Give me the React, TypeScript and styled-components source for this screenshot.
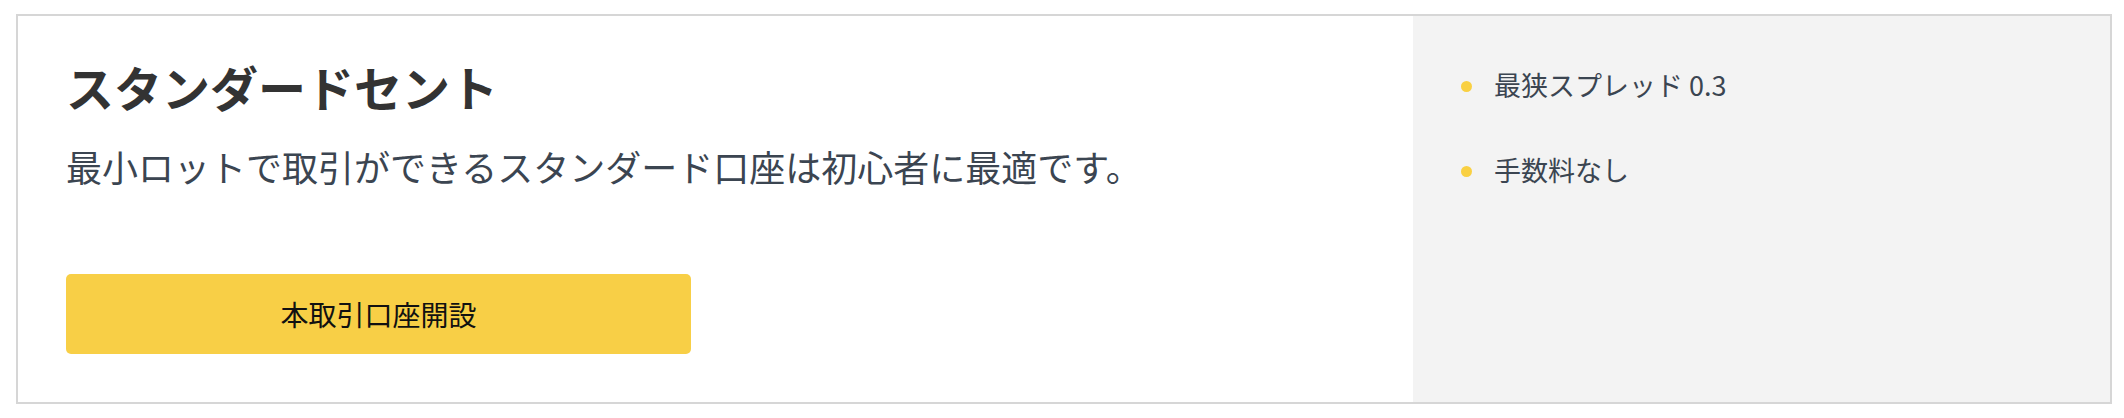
import React from "react";
import styled, { createGlobalStyle } from "styled-components";

const GlobalStyle = createGlobalStyle`
  body {
    margin: 0;
    background: #ffffff;
    font-family: "Noto Sans CJK JP", "Noto Sans", sans-serif;
  }
`;

const Page = styled.div`
  padding: 14px 12px 14px 16px;
`;

const Card = styled.section`
  display: flex;
  border: 2px solid #d6d6d6;
  background: #ffffff;
`;

const Main = styled.div`
  flex: 1;
  padding: 46px 48px 48px 48px;
  display: flex;
  flex-direction: column;
  align-items: flex-start;
`;

const Title = styled.h2`
  margin: 0;
  font-size: 48px;
  line-height: 1;
  font-weight: 700;
  color: #333333;
`;

const Lead = styled.p`
  margin: 38px 0 0;
  font-size: 36px;
  line-height: 1;
  color: #3b4551;
`;

const OpenButton = styled.button`
  margin-top: 90px;
  width: 625px;
  height: 80px;
  border: none;
  border-radius: 5px;
  background: #f8cf46;
  color: #111111;
  font-family: inherit;
  font-size: 28px;
  cursor: pointer;
`;

const Side = styled.aside`
  width: 697px;
  background: #f3f3f3;
  padding: 55px 48px 0;
  box-sizing: border-box;
`;

const List = styled.ul`
  list-style: none;
  margin: 0;
  padding: 0;
  display: flex;
  flex-direction: column;
  gap: 58px;
`;

const Item = styled.li`
  display: flex;
  align-items: center;
  gap: 22px;
  font-size: 27px;
  line-height: 1;
  color: #3b4551;
`;

const Dot = styled.span`
  width: 11px;
  height: 11px;
  border-radius: 50%;
  background: #f9d042;
  flex-shrink: 0;
  margin-top: 4px;
`;

const features = ["最狭スプレッド 0.3", "手数料なし"];

function App() {
  return (
    <>
      <GlobalStyle />
      <Page>
        <Card>
          <Main>
            <Title>スタンダードセント</Title>
            <Lead>最小ロットで取引ができるスタンダード口座は初心者に最適です。</Lead>
            <OpenButton>本取引口座開設</OpenButton>
          </Main>
          <Side>
            <List>
              {features.map((f) => (
                <Item key={f}>
                  <Dot />
                  {f}
                </Item>
              ))}
            </List>
          </Side>
        </Card>
      </Page>
    </>
  );
}

export default App;
